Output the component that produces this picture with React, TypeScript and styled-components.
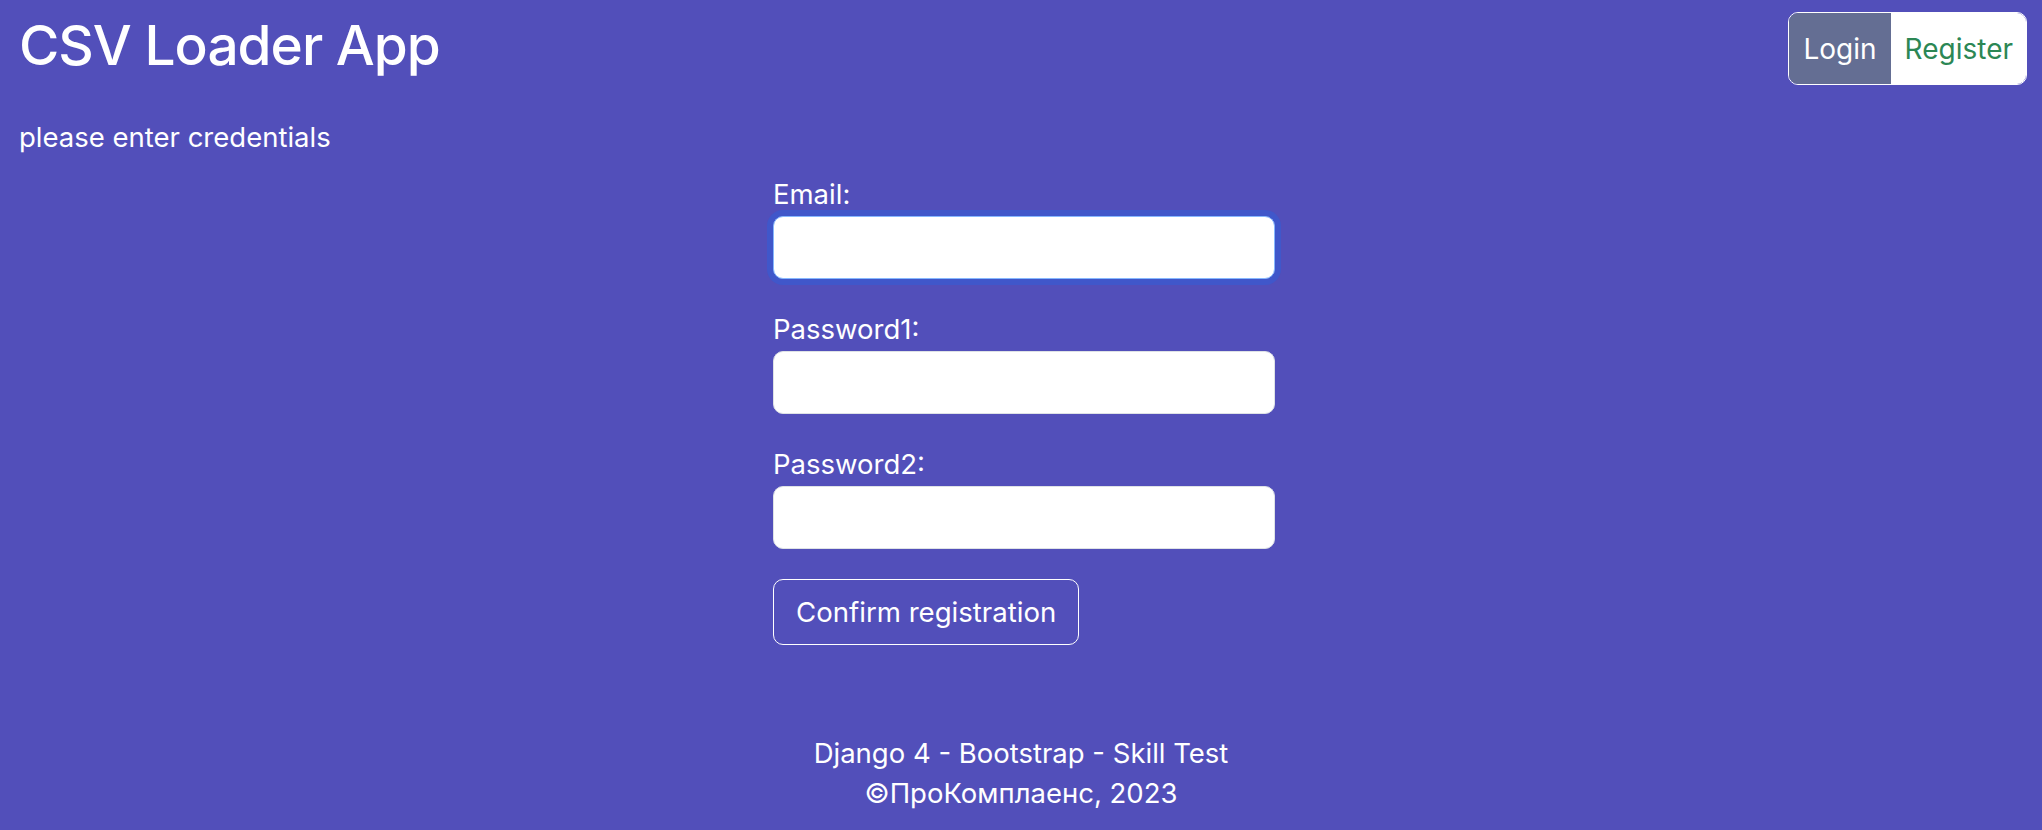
import React from "react";
import styled, { createGlobalStyle } from "styled-components";

const GlobalStyle = createGlobalStyle`
  html, body {
    margin: 0;
    padding: 0;
    background: #524fba;
  }
  body {
    font-family: Inter, "Noto Sans", "Noto Sans CJK SC", sans-serif;
    color: #ffffff;
    min-height: 830px;
  }
  * { box-sizing: border-box; }
`;

const Page = styled.div`
  display: flex;
  flex-direction: column;
  min-height: 830px;
`;

const Header = styled.header`
  display: flex;
  justify-content: space-between;
  align-items: flex-start;
  padding: 12px 15px 0 19px;
`;

const Title = styled.h1`
  margin: 0;
  font-size: 55px;
  font-weight: 500;
  line-height: 1.2;
  letter-spacing: -1px;
`;

const ButtonGroup = styled.div`
  display: flex;
  margin-top: 0;
  border: 1px solid #ffffff;
  border-radius: 10px;
  overflow: hidden;
`;

const NavButton = styled.a<{ $active?: boolean }>`
  display: flex;
  align-items: center;
  height: 71px;
  padding: 0 ${(p) => (p.$active ? "14px" : "13px")} 0 14px;
  font-size: 28px;
  line-height: 1;
  text-decoration: none;
  cursor: pointer;
  background: ${(p) => (p.$active ? "#646e93" : "#ffffff")};
  color: ${(p) => (p.$active ? "#ffffff" : "#2c8755")};
`;

const Prompt = styled.p`
  margin: 32px 0 0 19px;
  font-size: 27.5px;
  line-height: 40px;
`;

const Form = styled.form`
  width: 502px;
  margin: 17px 0 0 calc(50% - 248px);
  display: flex;
  flex-direction: column;
`;

const Field = styled.div`
  display: flex;
  flex-direction: column;
  margin-bottom: 30px;
`;

const Label = styled.label`
  font-size: 27.5px;
  line-height: 40px;
  margin-bottom: 2px;
`;

const Input = styled.input<{ $focused?: boolean }>`
  height: 63px;
  width: 100%;
  border-radius: 10px;
  background: #ffffff;
  border: 1px solid ${(p) => (p.$focused ? "#86b7fe" : "#dee2e6")};
  box-shadow: ${(p) => (p.$focused ? "0 0 0 6px rgba(13,110,253,0.25)" : "none")};
  outline: none;
  padding: 0 18px;
  font-size: 24px;
  font-family: inherit;
`;

const SubmitButton = styled.button`
  align-self: flex-start;
  height: 66px;
  padding: 0 22px;
  background: transparent;
  color: #ffffff;
  border: 1px solid #ffffff;
  border-radius: 10px;
  font-family: inherit;
  font-size: 27.6px;
  cursor: pointer;
`;

const Footer = styled.footer`
  margin-top: auto;
  padding-bottom: 17px;
  text-align: center;
  font-size: 27.5px;
  line-height: 40px;
`;

export default function App() {
  return (
    <>
      <GlobalStyle />
      <Page>
        <Header>
          <Title>CSV Loader App</Title>
          <ButtonGroup>
            <NavButton $active>Login</NavButton>
            <NavButton>Register</NavButton>
          </ButtonGroup>
        </Header>
        <Prompt>please enter credentials</Prompt>
        <Form onSubmit={(e) => e.preventDefault()}>
          <Field>
            <Label>Email:</Label>
            <Input type="email" $focused />
          </Field>
          <Field>
            <Label>Password1:</Label>
            <Input type="password" />
          </Field>
          <Field>
            <Label>Password2:</Label>
            <Input type="password" />
          </Field>
          <SubmitButton type="submit">Confirm registration</SubmitButton>
        </Form>
        <Footer>
          <div>Django 4 - Bootstrap - Skill Test</div>
          <div>©ПроКомплаенс, 2023</div>
        </Footer>
      </Page>
    </>
  );
}
